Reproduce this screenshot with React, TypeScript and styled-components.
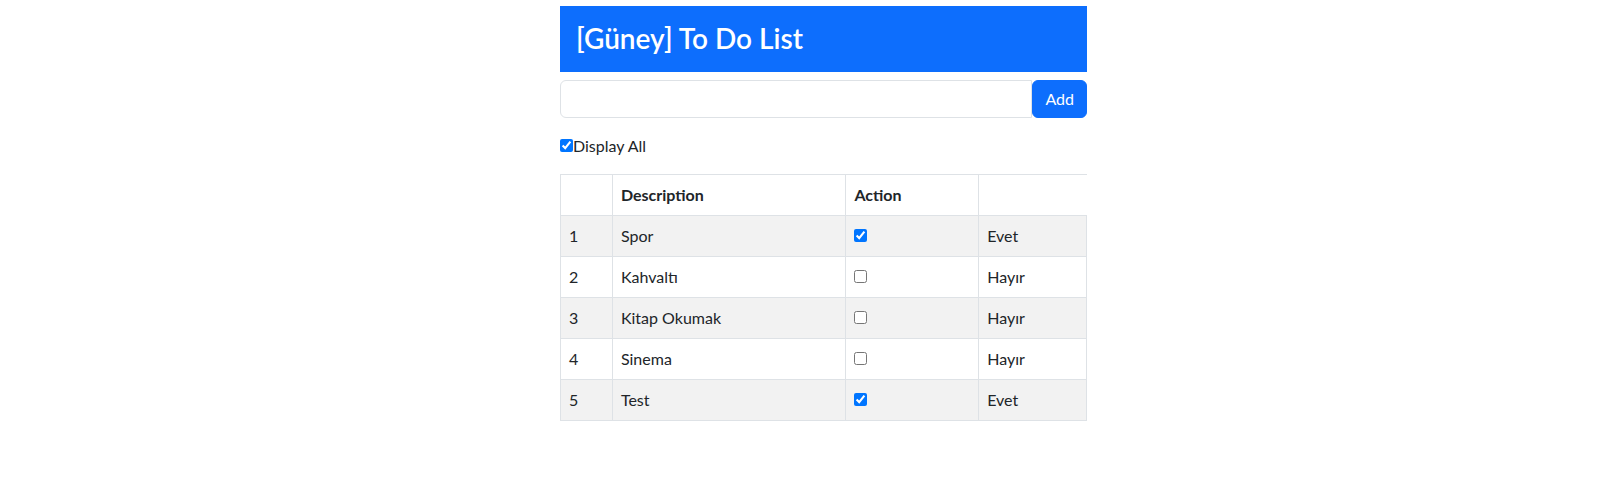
import { useState } from "react"
import styled, { createGlobalStyle } from "styled-components"

const GlobalStyle = createGlobalStyle`
	* {
		box-sizing: border-box;
	}
	body {
		margin: 0;
		background: #fff;
		color: #212529;
		font-family: "Segoe UI", Lato, "Noto Sans", sans-serif;
		font-size: 16px;
		line-height: 1.5;
	}
	input,
	button {
		margin: 0;
		font-family: inherit;
	}
`

const Page = styled.div`
	padding: 6px 0 0 560px;
`

const Main = styled.div`
	width: 527px;
`

const Title = styled.h3`
	margin: 0 0 8px;
	padding: 16px;
	background: #0d6efd;
	color: #fff;
	font-size: 28px;
	font-weight: 600;
	line-height: 1.2;
`

const InputRow = styled.div`
	display: flex;
`

const TextInput = styled.input`
	flex: 1;
	height: 38px;
	padding: 6px 12px;
	border: 1px solid #dee2e6;
	border-radius: 6px 0 0 6px;
	font-size: 16px;
	outline: none;
`

const AddButton = styled.button`
	height: 38px;
	padding: 6px 12px;
	border: 1px solid #0d6efd;
	border-radius: 6px;
	background: #0d6efd;
	color: #fff;
	font-size: 16px;
	line-height: 24px;
	cursor: pointer;
`

const Toggle = styled.label`
	display: block;
	margin: 16px 0;
	line-height: 24px;
`

const Table = styled.table`
	width: 100%;
	border-collapse: collapse;
	margin-bottom: 16px;
`

const Col = styled.col<{ $w: number }>`
	width: ${(p) => p.$w}px;
`

const Row = styled.tr<{ $striped?: boolean }>`
	border-top: 1px solid #dee2e6;
	border-bottom: 1px solid #dee2e6;
	background: ${(p) => (p.$striped ? "#f2f2f2" : "#fff")};
`

const Th = styled.th`
	padding: 8px;
	border-left: 1px solid #dee2e6;
	border-right: 1px solid #dee2e6;
	text-align: left;
	font-weight: 700;
	vertical-align: bottom;
`

const Td = styled.td`
	padding: 8px;
	border-left: 1px solid #dee2e6;
	border-right: 1px solid #dee2e6;
	vertical-align: top;
`

const items = [
	{ action: "Spor", done: true },
	{ action: "Kahvaltı", done: false },
	{ action: "Kitap Okumak", done: false },
	{ action: "Sinema", done: false },
	{ action: "Test", done: true },
]

export default function App() {
	const [todos, setTodos] = useState(items)
	const [showAll, setShowAll] = useState(true)

	return (
		<Page>
			<GlobalStyle />
			<Main>
				<Title>[Güney] To Do List</Title>
				<InputRow>
					<TextInput type="text" />
					<AddButton>Add</AddButton>
				</InputRow>
				<Toggle>
					<input
						type="checkbox"
						checked={showAll}
						onChange={(e) => setShowAll(e.target.checked)}
					/>
					Display All
				</Toggle>
				<Table>
					<colgroup>
						<Col $w={52} />
						<Col $w={234} />
						<Col $w={133} />
						<Col $w={108} />
					</colgroup>
					<thead>
						<Row>
							<Th></Th>
							<Th>Description</Th>
							<Th>Action</Th>
						</Row>
					</thead>
					<tbody>
						{todos
							.filter((t) => showAll || !t.done)
							.map((t, i) => (
								<Row key={t.action} $striped={i % 2 === 0}>
									<Td>{i + 1}</Td>
									<Td>{t.action}</Td>
									<Td>
										<input
											type="checkbox"
											checked={t.done}
											onChange={() =>
												setTodos(
													todos.map((x) =>
														x.action === t.action ? { ...x, done: !x.done } : x
													)
												)
											}
										/>
									</Td>
									<Td>{t.done ? "Evet" : "Hayır"}</Td>
								</Row>
							))}
					</tbody>
				</Table>
			</Main>
		</Page>
	)
}
